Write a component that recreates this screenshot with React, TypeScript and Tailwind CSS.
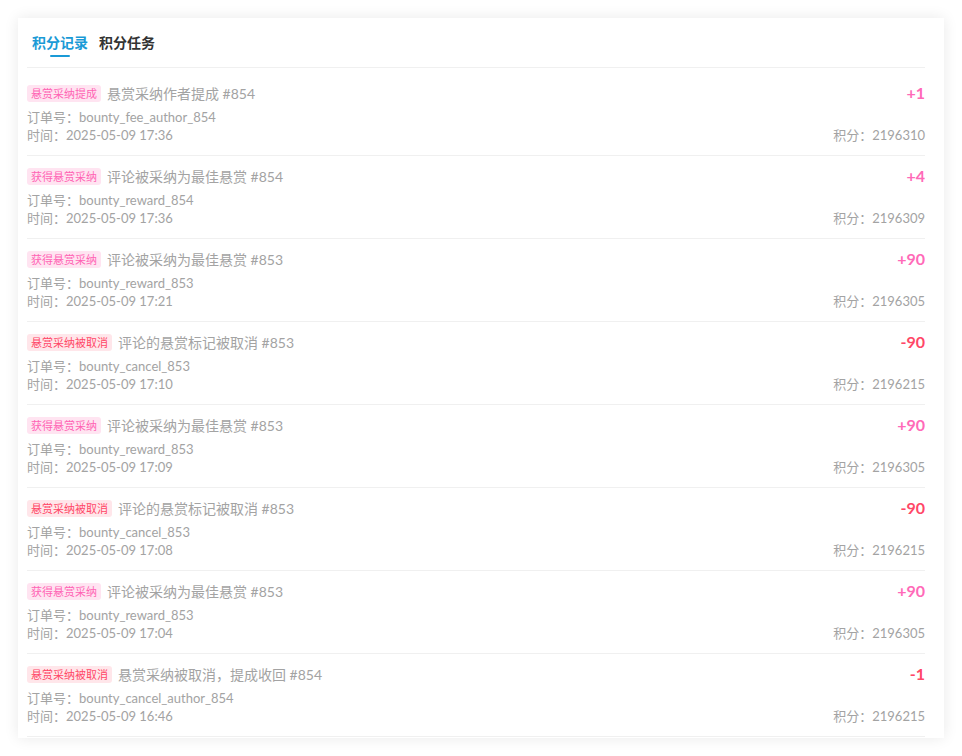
import React from "react";

type Kind = "fee" | "reward" | "cancel";

const tagStyle: Record<Kind, { label: string; cls: string }> = {
  fee: { label: "悬赏采纳提成", cls: "bg-[#ffe4f1] text-[#ff63b4]" },
  reward: { label: "获得悬赏采纳", cls: "bg-[#ffe4f1] text-[#ff63b4]" },
  cancel: { label: "悬赏采纳被取消", cls: "bg-[#ffe6ea] text-[#ff4767]" },
};

const records: {
  kind: Kind;
  title: string;
  order: string;
  time: string;
  amount: string;
  total: string;
}[] = [
  { kind: "fee", title: "悬赏采纳作者提成 #854", order: "bounty_fee_author_854", time: "2025-05-09 17:36", amount: "+1", total: "2196310" },
  { kind: "reward", title: "评论被采纳为最佳悬赏 #854", order: "bounty_reward_854", time: "2025-05-09 17:36", amount: "+4", total: "2196309" },
  { kind: "reward", title: "评论被采纳为最佳悬赏 #853", order: "bounty_reward_853", time: "2025-05-09 17:21", amount: "+90", total: "2196305" },
  { kind: "cancel", title: "评论的悬赏标记被取消 #853", order: "bounty_cancel_853", time: "2025-05-09 17:10", amount: "-90", total: "2196215" },
  { kind: "reward", title: "评论被采纳为最佳悬赏 #853", order: "bounty_reward_853", time: "2025-05-09 17:09", amount: "+90", total: "2196305" },
  { kind: "cancel", title: "评论的悬赏标记被取消 #853", order: "bounty_cancel_853", time: "2025-05-09 17:08", amount: "-90", total: "2196215" },
  { kind: "reward", title: "评论被采纳为最佳悬赏 #853", order: "bounty_reward_853", time: "2025-05-09 17:04", amount: "+90", total: "2196305" },
  { kind: "cancel", title: "悬赏采纳被取消，提成收回 #854", order: "bounty_cancel_author_854", time: "2025-05-09 16:46", amount: "-1", total: "2196215" },
];

const App = () => {
  return (
    <div className="min-h-screen bg-white p-[18px] font-['Lato','Noto_Sans_CJK_SC',sans-serif]">
      <div className="w-[926px] h-[720px] bg-white shadow-[0_0_14px_rgba(0,0,0,0.09)] pl-[9px] pr-[19px] pt-[15px] overflow-hidden">
        {/* Tabs */}
        <div className="flex gap-[11px] pl-[5px] border-b border-[#f0f0f0] h-[35px]">
          <div className="flex flex-col items-center">
            <span className="text-[14px] leading-[20px] font-bold text-[#1a9ad6]">积分记录</span>
            <span className="mt-[2px] w-[20px] h-[2px] rounded-full bg-[#1a9ad6]" />
          </div>
          <span className="text-[14px] leading-[20px] font-bold text-[#333]">积分任务</span>
        </div>

        {/* Records */}
        <div className="mt-[5px]">
          {records.map((r, i) => {
            const tag = tagStyle[r.kind];
            const minus = r.amount.startsWith("-");
            return (
              <div key={i} className="border-b border-[#f0f0f0] pt-[10px] pb-[11px]">
                <div className="flex items-center justify-between h-[20px]">
                  <div className="flex items-center gap-[6px]">
                    <span className={`text-[11px] leading-[17px] px-[4px] rounded-[3px] ${tag.cls}`}>
                      {tag.label}
                    </span>
                    <span className="text-[14px] text-[#a3a3a3]">{r.title}</span>
                  </div>
                  <span className={`text-[16px] font-bold ${minus ? "text-[#ff4767]" : "text-[#ff6ab8]"}`}>
                    {r.amount}
                  </span>
                </div>
                <div className="mt-[5px] text-[13px] leading-[18px] text-[#a3a3a3]">
                  订单号：{r.order}
                </div>
                <div className="flex justify-between text-[13px] leading-[18px] text-[#a3a3a3]">
                  <span>时间：{r.time}</span>
                  <span>积分：{r.total}</span>
                </div>
              </div>
            );
          })}
        </div>
      </div>
    </div>
  );
};

export default App;
